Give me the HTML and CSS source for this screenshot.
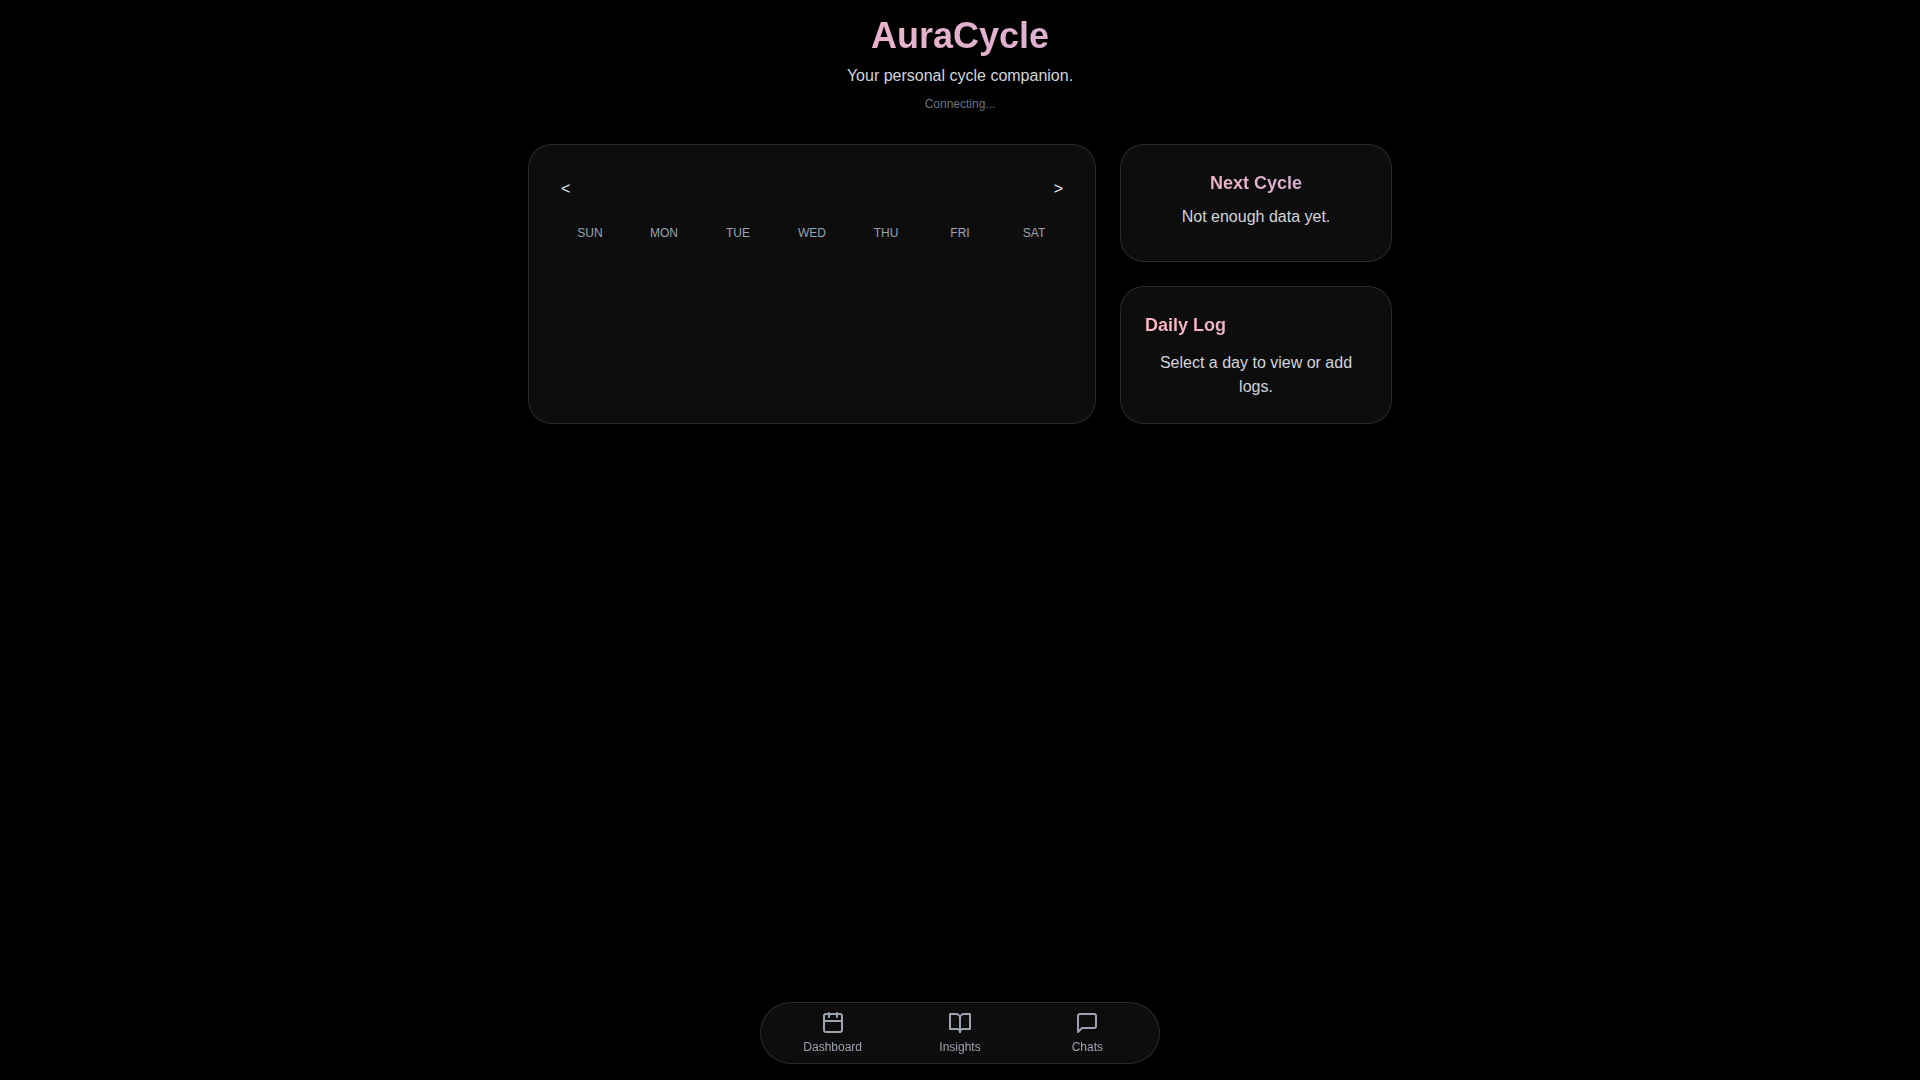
FILE: index.html
```html
<!DOCTYPE html>
<html lang="en">
<head>
  <meta charset="UTF-8">
  <meta name="viewport" content="width=device-width, initial-scale=1">
  <title>AuraCycle</title>
  <link rel="stylesheet" href="styles.css">
</head>
<body>
  <div class="page">
    <header class="header">
      <h1 class="title gradient-text">AuraCycle</h1>
      <p class="subtitle">Your personal cycle companion.</p>
      <p class="status">Connecting...</p>
    </header>

    <main class="dashboard">
      <section class="card calendar" aria-label="Calendar">
        <div class="calendar-bar">
          <button class="month-button" type="button" aria-label="Previous month">&lt;</button>
          <button class="month-button" type="button" aria-label="Next month">&gt;</button>
        </div>
        <div class="weekdays">
          <span>SUN</span>
          <span>MON</span>
          <span>TUE</span>
          <span>WED</span>
          <span>THU</span>
          <span>FRI</span>
          <span>SAT</span>
        </div>
      </section>

      <div class="side">
        <section class="card next-cycle">
          <h2 class="card-title gradient-text">Next Cycle</h2>
          <p class="card-text">Not enough data yet.</p>
        </section>
        <section class="card daily-log">
          <h2 class="card-title gradient-text">Daily Log</h2>
          <p class="card-text">Select a day to view or add logs.</p>
        </section>
      </div>
    </main>
  </div>

  <nav class="nav" aria-label="Main">
    <button class="nav-item" type="button">
      <svg class="icon" viewBox="0 0 24 24" aria-hidden="true">
        <rect x="3" y="3" width="18" height="18" rx="2"/>
        <path d="M16 2v4M8 2v4M3 10h18"/>
      </svg>
      <span>Dashboard</span>
    </button>
    <button class="nav-item" type="button">
      <svg class="icon" viewBox="0 0 24 24" aria-hidden="true">
        <path d="M2 3h6a4 4 0 0 1 4 4v14a3 3 0 0 0-3-3H2z"/>
        <path d="M22 3h-6a4 4 0 0 0-4 4v14a3 3 0 0 1 3-3h7z"/>
      </svg>
      <span>Insights</span>
    </button>
    <button class="nav-item" type="button">
      <svg class="icon" viewBox="0 0 24 24" aria-hidden="true">
        <path d="M21 15a2 2 0 0 1-2 2H7l-4 4V5a2 2 0 0 1 2-2h14a2 2 0 0 1 2 2z"/>
      </svg>
      <span>Chats</span>
    </button>
  </nav>
</body>
</html>
```
FILE: styles.css
```css
*,
*::before,
*::after {
  box-sizing: border-box;
}

body {
  margin: 0;
  min-height: 100vh;
  background: #000;
  color: #e5e7eb;
  font-family: "Liberation Sans", Arial, sans-serif;
  font-size: 16px;
  line-height: 24px;
}

h1,
h2,
p {
  margin: 0;
}

button {
  border: 0;
  background: none;
  color: inherit;
  font: inherit;
  cursor: pointer;
}

.page {
  max-width: 896px;
  margin: 0 auto;
  padding: 16px 16px 96px;
}

.gradient-text {
  background: linear-gradient(90deg, #ffb6c1, #c8addb);
  background-clip: text;
  -webkit-background-clip: text;
  color: transparent;
}

.header {
  display: flex;
  flex-direction: column;
  gap: 8px;
  margin-bottom: 32px;
  text-align: center;
}

.title {
  font-size: 36px;
  line-height: 40px;
}

.subtitle,
.card-text {
  color: #d1d5db;
}

.status {
  color: #6b7280;
  font-size: 12px;
  line-height: 16px;
}

.dashboard {
  display: grid;
  grid-template-columns: 1fr 1fr 1fr;
  gap: 24px;
}

.card {
  padding: 24px;
  border: 1px solid rgba(255, 255, 255, 0.12);
  border-radius: 24px;
  background: rgba(255, 255, 255, 0.05);
}

.calendar {
  grid-column: span 2;
}

.calendar-bar {
  display: flex;
  justify-content: space-between;
  margin-bottom: 16px;
}

.month-button {
  padding: 8px;
  border-radius: 20px;
}

.weekdays {
  display: grid;
  grid-template-columns: repeat(7, 1fr);
  color: #9ca3af;
  font-size: 12px;
  line-height: 16px;
  text-align: center;
}

.side {
  display: flex;
  flex-direction: column;
  gap: 24px;
}

.card-title {
  font-size: 18px;
  line-height: 28px;
}

.next-cycle {
  display: flex;
  flex-direction: column;
  gap: 8px;
  padding-bottom: 32px;
  text-align: center;
}

.daily-log {
  display: flex;
  flex-direction: column;
  gap: 12px;
}

.daily-log .card-text {
  text-align: center;
}

.nav {
  position: fixed;
  right: 0;
  bottom: 16px;
  left: 0;
  display: grid;
  grid-template-columns: repeat(3, 1fr);
  max-width: 400px;
  margin: 0 auto;
  padding: 8px;
  border: 1px solid rgba(255, 255, 255, 0.12);
  border-radius: 32px;
  background: rgba(255, 255, 255, 0.05);
}

.nav-item {
  display: flex;
  flex-direction: column;
  align-items: center;
  gap: 4px;
  padding: 0;
  color: #9ca3af;
  font-size: 12px;
  line-height: 16px;
}

.icon {
  width: 24px;
  height: 24px;
  fill: none;
  stroke: currentColor;
  stroke-width: 2;
  stroke-linecap: round;
  stroke-linejoin: round;
}

@media (max-width: 767px) {
  .dashboard {
    grid-template-columns: 1fr;
  }

  .calendar {
    grid-column: auto;
    min-height: 280px;
  }
}
```
